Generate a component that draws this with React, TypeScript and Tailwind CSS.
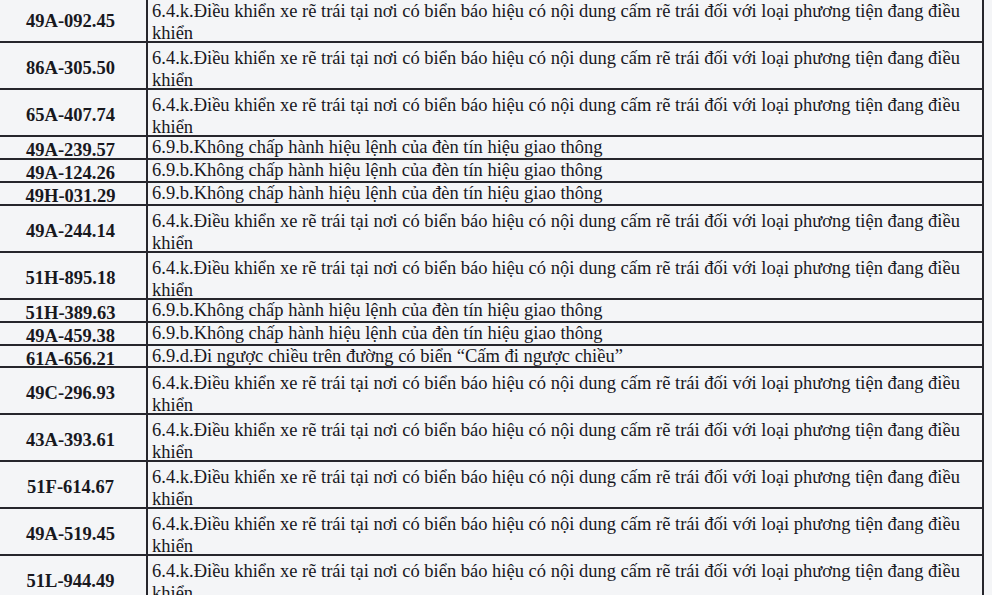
import React from 'react';

const LEFT_TURN =
  '6.4.k.Điều khiển xe rẽ trái tại nơi có biển báo hiệu có nội dung cấm rẽ trái đối với loại phương tiện đang điều khiển';
const SIGNAL = '6.9.b.Không chấp hành hiệu lệnh của đèn tín hiệu giao thông';
const WRONG_WAY = '6.9.d.Đi ngược chiều trên đường có biển “Cấm đi ngược chiều”';

type Row = { plate: string; text: string; tall: boolean; short?: boolean };

const ROWS: Row[] = [
  { plate: '49A-092.45', text: LEFT_TURN, tall: true },
  { plate: '86A-305.50', text: LEFT_TURN, tall: true },
  { plate: '65A-407.74', text: LEFT_TURN, tall: true },
  { plate: '49A-239.57', text: SIGNAL, tall: false },
  { plate: '49A-124.26', text: SIGNAL, tall: false },
  { plate: '49H-031.29', text: SIGNAL, tall: false },
  { plate: '49A-244.14', text: LEFT_TURN, tall: true },
  { plate: '51H-895.18', text: LEFT_TURN, tall: true },
  { plate: '51H-389.63', text: SIGNAL, tall: false },
  { plate: '49A-459.38', text: SIGNAL, tall: false },
  { plate: '61A-656.21', text: WRONG_WAY, tall: false, short: true },
  { plate: '49C-296.93', text: LEFT_TURN, tall: true },
  { plate: '43A-393.61', text: LEFT_TURN, tall: true },
  { plate: '51F-614.67', text: LEFT_TURN, tall: true },
  { plate: '49A-519.45', text: LEFT_TURN, tall: true },
  { plate: '51L-944.49', text: LEFT_TURN, tall: true },
];

export default function App() {
  return (
    <div
      className="w-[992px] h-[595px] overflow-hidden bg-[#f4f5f7] text-[#18181e]"
      style={{ fontFamily: '"Liberation Serif", "Times New Roman", serif' }}
    >
      <div className="-mt-[4px] w-[984px] flex flex-col">
        {ROWS.map((r, i) => (
          <div
            key={i}
            className={`flex border-b-2 border-[#26262c] ${
              r.tall ? 'h-[47px]' : r.short ? 'h-[22px]' : 'h-[23px]'
            }`}
          >
            {/* plate number */}
            <div className="w-[148px] shrink-0 border-r-2 border-[#26262c] flex items-center justify-center pt-[5px] pr-[5px] text-[18.5px] leading-[22px] font-bold whitespace-nowrap">
              {r.plate}
            </div>
            {/* violation */}
            <div
              className={`flex-1 border-r-2 border-[#26262c] pl-[4px] pr-[4px] text-[18.5px] leading-[20px] ${
                r.tall ? 'pt-[4px] leading-[22px]' : 'pt-0'
              }`}
            >
              {r.text}
            </div>
          </div>
        ))}
      </div>
    </div>
  );
}
